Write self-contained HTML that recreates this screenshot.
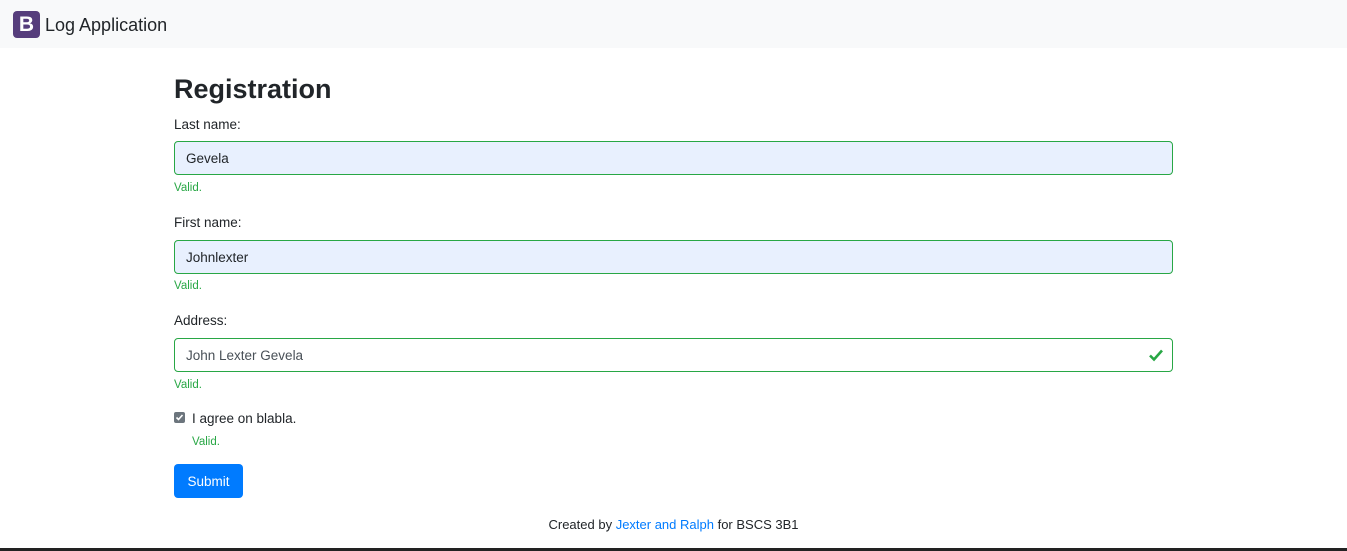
<!DOCTYPE html>
<html><head><meta charset="utf-8"><style>
body{margin:0;width:1347px;height:551px;position:relative;background:#fff;font-family:"Liberation Sans",sans-serif;color:#212529;overflow:hidden}
.a{position:absolute;white-space:nowrap}
.nav{position:absolute;left:0;top:0;width:1347px;height:48px;background:#f8f9fa}
.logo{position:absolute;left:13px;top:11px;width:27px;height:27px;border-radius:4px;background:#563d7c;color:#fff;font-weight:bold;font-size:21px;line-height:27px;text-align:center}
.lbl{font-size:13.5px}
.inp{position:absolute;left:174px;width:997px;height:32px;border:1px solid #28a745;border-radius:4px;font-size:13.5px;line-height:34px;text-indent:11px;color:#212529}
.v{font-size:11.5px;color:#28a745}
</style></head><body>
<div class="nav"><div class="logo">B</div><div class="a" style="left:45px;top:15px;font-size:18px">Log Application</div></div>
<div class="a" style="left:174px;top:74px;font-size:27px;font-weight:bold">Registration</div>
<div class="a lbl" style="left:174px;top:117px">Last name:</div>
<div class="inp" style="top:141px;background:#e8f0fe">Gevela</div>
<div class="a v" style="left:174px;top:182px">Valid.</div>
<div class="a lbl" style="left:174px;top:215px">First name:</div>
<div class="inp" style="top:240px;background:#e8f0fe">Johnlexter</div>
<div class="a v" style="left:174px;top:280px">Valid.</div>
<div class="a lbl" style="left:174px;top:313px">Address:</div>
<div class="inp" style="top:338px;background:#fff;color:#495057">John Lexter Gevela
<svg style="position:absolute;right:8px;top:9px" width="16" height="14" viewBox="0 0 16 14"><path d="M2 7.5 L6 11.5 L14 2.5" stroke="#28a745" stroke-width="2.6" fill="none"/></svg></div>
<div class="a v" style="left:174px;top:379px">Valid.</div>
<div class="a" style="left:174px;top:412px;width:11px;height:11px;background:#6c757d;border-radius:2px"><svg width="11" height="11" viewBox="0 0 11 11" style="position:absolute;left:0;top:0"><path d="M2.5 5.5 L4.5 7.5 L8.5 3" stroke="#fff" stroke-width="1.6" fill="none"/></svg></div>
<div class="a" style="left:192px;top:411px;font-size:13.5px">I agree on blabla.</div>
<div class="a v" style="left:192px;top:436px">Valid.</div>
<div class="a" style="left:174px;top:464px;width:69px;height:34px;background:#007bff;border-radius:4px;color:#fff;font-size:13.5px;line-height:36px;text-align:center">Submit</div>
<div class="a" style="left:0;width:1347px;top:517px;text-align:center;font-size:13px">Created by <span style="color:#007bff">Jexter and Ralph</span> for BSCS 3B1</div>
<div class="a" style="left:0;top:548px;width:1347px;height:3px;background:#222"></div>
</body></html>
